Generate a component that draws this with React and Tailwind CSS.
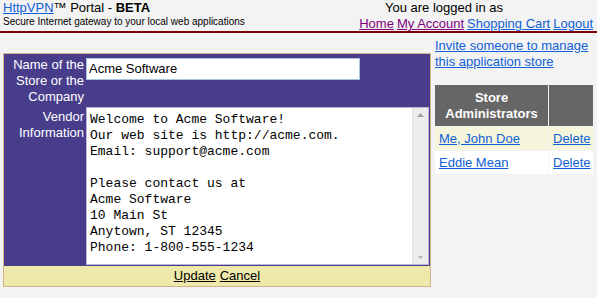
const link = "text-[#1060d6] underline";
const visited = "text-[#800080] underline";

function Header() {
  return (
    <div className="flex justify-between h-[31px] px-[3px]">
      <div>
        <div className="text-[13px] leading-[16px]">
          <a href="#" className={link}>HttpVPN</a>™ Portal - <b>BETA</b>
        </div>
        <div className="text-[10px] leading-[12px]">
          Secure Internet gateway to your local web applications
        </div>
      </div>
      <div className="flex flex-col items-end text-[13px] leading-[16px] pr-px">
        <div className="mr-[90px]">You are logged in as</div>
        <div className="flex gap-[3px]">
          <a href="#" className={visited}>Home</a>
          <a href="#" className={visited}>My Account</a>
          <a href="#" className={link}>Shopping Cart</a>
          <a href="#" className={link}>Logout</a>
        </div>
      </div>
    </div>
  );
}

const vendorText = `Welcome to Acme Software!
Our web site is http://acme.com.
Email: support@acme.com

Please contact us at
Acme Software
10 Main St
Anytown, ST 12345
Phone: 1-800-555-1234`;

function StoreForm() {
  return (
    <div className="w-[428px] border border-[#d2b48c] bg-[#483d8b]">
      <div className="grid grid-cols-[79px_343px] gap-x-[2px] gap-y-[2px] pt-[2px] pl-px">
        <div className="text-right text-white text-[13px] leading-[16px] pt-px">
          Name of the Store or the Company
        </div>
        <div>
          <input
            defaultValue="Acme Software"
            className="w-[274px] h-[22px] bg-white border border-[#a9c4e2] px-[2px] text-[13px] text-black outline-none"
          />
        </div>
        <div className="text-right text-white text-[13px] leading-[16px] pt-[2px]">
          Vendor Information
        </div>
        <div className="flex w-[343px] h-[158px] bg-white border border-[#b9b6d8]">
          <textarea
            defaultValue={vendorText}
            className="block flex-1 h-full bg-white px-[3px] py-[4px] text-[13px] leading-[16px] text-black resize-none overflow-hidden outline-none"
            style={{ fontFamily: '"Liberation Mono", "Courier New", monospace' }}
          />
          <div className="w-[16px] h-full bg-[#ededed] border-l border-[#e2e2e2] flex flex-col justify-between items-center py-[5px]">
            <svg width="7" height="4" viewBox="0 0 7 4">
              <path d="M0 4 L3.5 0 L7 4 Z" fill="#a3a3a3" />
            </svg>
            <svg width="5" height="3" viewBox="0 0 5 3">
              <path d="M0 0 L5 0 L2.5 3 Z" fill="#b5b5b5" />
            </svg>
          </div>
        </div>
      </div>
      <div className="mt-[1px] h-[20px] bg-[#eee8aa] flex justify-center items-center gap-[4px] text-[13px]">
        <a href="#" className="text-black underline">Update</a>
        <a href="#" className="text-black underline">Cancel</a>
      </div>
    </div>
  );
}

function Admins() {
  const rows = [
    { name: "Me, John Doe", bg: "bg-[#f5f5dc]" },
    { name: "Eddie Mean", bg: "bg-white" },
  ];
  return (
    <div className="grid grid-cols-[113px_44px] gap-px mt-[15px] text-[13px] leading-[16px]">
      <div className="bg-[#666666] text-white font-bold text-center h-[41px] flex items-center justify-center">
        Store Administrators
      </div>
      <div className="bg-[#666666]" />
      {rows.map((r) => (
        <div key={r.name} className="contents">
          <div className={`${r.bg} h-[23px] flex items-center pl-[4px]`}>
            <a href="#" className={link}>{r.name}</a>
          </div>
          <div className={`${r.bg} h-[23px] flex items-center pl-[4px]`}>
            <a href="#" className={link}>Delete</a>
          </div>
        </div>
      ))}
    </div>
  );
}

export default function App() {
  return (
    <div
      className="w-[597px] h-[298px] bg-[#f3f3f3] text-black overflow-hidden"
      style={{ fontFamily: '"Liberation Sans", Arial, sans-serif' }}
    >
      <Header />
      <div className="h-[2px] bg-[#800000]" />
      <div className="flex gap-[4px] pl-[3px] pt-[5px]">
        <div className="pt-[15px]">
          <StoreForm />
        </div>
        <div className="w-[158px]">
          <div className="text-[13px] leading-[16px]">
            <a href="#" className={link}>
              Invite someone to manage this application store
            </a>
          </div>
          <Admins />
        </div>
      </div>
    </div>
  );
}
